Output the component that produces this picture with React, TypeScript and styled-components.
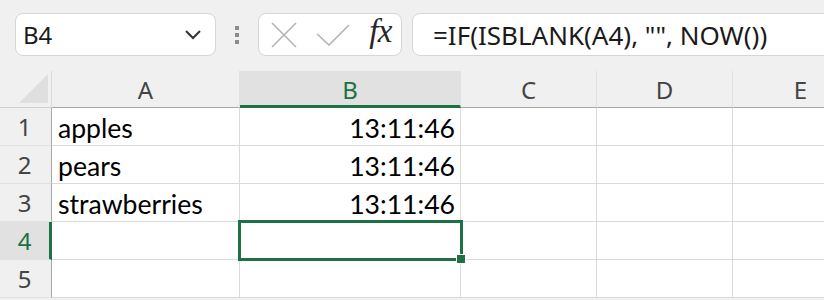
import React from "react";
import styled, { createGlobalStyle } from "styled-components";

const Global = createGlobalStyle`
  html, body { margin: 0; padding: 0; background: #f0f0f0; }
  body { width: 824px; height: 300px; overflow: hidden; }
`;

const Page = styled.div`
  width: 824px;
  height: 300px;
  background: #f0f0f0;
  overflow: hidden;
  font-family: "Noto Sans", "Open Sans", sans-serif;
`;

const Toolbar = styled.div`
  display: flex;
  align-items: center;
  height: 71px;
  padding: 0 0 2px 15px;
  box-sizing: border-box;
`;

const Box = styled.div<{ $w: number }>`
  width: ${(p) => p.$w}px;
  flex: none;
  height: 43px;
  box-sizing: border-box;
  background: #fff;
  border: 1px solid #d6d6d6;
  border-radius: 8px;
  display: flex;
  align-items: center;
`;

const NameText = styled.span`
  flex: 1;
  padding-left: 7px;
  font-size: 24px;
  color: #1a1a1a;
`;

const Chevron = styled.svg`
  margin-right: 13px;
`;

const Dots = styled.div`
  width: 42px;
  flex: none;
  display: flex;
  flex-direction: column;
  align-items: center;
  gap: 3px;
  & > i {
    display: block;
    width: 4px;
    height: 4px;
    background: #8c8c8c;
  }
`;

const IconsBox = styled(Box)`
  justify-content: space-between;
  padding: 0 9px 0 12px;
`;

const Fx = styled.span`
  font-family: "Liberation Serif", "DejaVu Serif", serif;
  font-style: italic;
  font-size: 33px;
  color: #262626;
  letter-spacing: -0.5px;
  margin-top: -6px;
`;

const FormulaBox = styled(Box)`
  margin-left: 10px;
  padding-left: 20px;
  border-top-right-radius: 0;
  border-bottom-right-radius: 0;
`;

const FormulaText = styled.span`
  font-size: 26px;
  color: #1a1a1a;
  white-space: nowrap;
`;

const Grid = styled.div`
  display: grid;
  grid-template-columns: 52px 188px 221px 136px 136px 136px;
  grid-template-rows: 37px repeat(5, 38px);
  width: 869px;
  background: #fff;
`;

const Corner = styled.div`
  background: #f0f0f0;
  border-right: 1px solid #d5dae0;
  border-bottom: 1px solid #c8d0d8;
  position: relative;
  box-sizing: border-box;
  &::after {
    content: "";
    position: absolute;
    right: 3px;
    bottom: 4px;
    width: 29px;
    height: 29px;
    background: #dfdfdf;
    clip-path: polygon(100% 0, 100% 100%, 0 100%);
  }
`;

const ColHead = styled.div<{ $sel?: boolean }>`
  box-sizing: border-box;
  background: ${(p) => (p.$sel ? "#e1e1e1" : "#f0f0f0")};
  border-right: 1px solid #dde2e6;
  border-bottom: ${(p) => (p.$sel ? "3px solid #1e7145" : "1px solid #a8a8a8")};
  display: flex;
  align-items: center;
  justify-content: center;
  padding-top: ${(p) => (p.$sel ? "2px" : "0")};
  font-size: 24px;
  color: ${(p) => (p.$sel ? "#1e7145" : "#444")};
`;

const RowHead = styled.div<{ $sel?: boolean }>`
  box-sizing: border-box;
  background: ${(p) => (p.$sel ? "#e1e1e1" : "#f0f0f0")};
  border-right: ${(p) => (p.$sel ? "3px solid #1e7145" : "1px solid #a8a8a8")};
  border-bottom: 1px solid #dde2e6;
  display: flex;
  align-items: center;
  justify-content: center;
  padding-right: ${(p) => (p.$sel ? "0" : "2px")};
  font-size: 24px;
  color: ${(p) => (p.$sel ? "#1e7145" : "#444")};
`;

const Cell = styled.div<{ $right?: boolean }>`
  box-sizing: border-box;
  position: relative;
  border-right: 1px solid #dadada;
  border-bottom: 1px solid #dadada;
  display: flex;
  align-items: center;
  justify-content: ${(p) => (p.$right ? "flex-end" : "flex-start")};
  padding: 2px 5px 0 6px;
  font-family: "Lato", "Open Sans", sans-serif;
  font-size: 26.6px;
  color: #000;
  white-space: nowrap;
`;

const Selection = styled.div`
  position: absolute;
  left: -2px;
  top: -2px;
  right: -3px;
  bottom: -2px;
  border: 3px solid #1e7145;
  pointer-events: none;
  z-index: 2;
`;

const Handle = styled.div`
  position: absolute;
  right: -6px;
  bottom: -6px;
  width: 8px;
  height: 8px;
  background: #1e7145;
  border: 1px solid #fff;
`;

const cols = ["A", "B", "C", "D", "E"];
const data: [string, string][] = [
  ["apples", "13:11:46"],
  ["pears", "13:11:46"],
  ["strawberries", "13:11:46"],
  ["", ""],
  ["", ""],
];

export default function App() {
  return (
    <Page>
      <Global />
      <Toolbar>
        <Box $w={201}>
          <NameText>B4</NameText>
          <Chevron width="18" height="12" viewBox="0 0 18 12">
            <path d="M2 2 L9 9 L16 2" fill="none" stroke="#333" strokeWidth="2" />
          </Chevron>
        </Box>
        <Dots>
          <i />
          <i />
          <i />
        </Dots>
        <IconsBox $w={144}>
          <svg width="26" height="26" viewBox="0 0 26 26">
            <path d="M1 1 L25 25 M25 1 L1 25" stroke="#b4b4b4" strokeWidth="1.6" fill="none" />
          </svg>
          <svg width="34" height="22" viewBox="0 0 34 22">
            <path d="M1 10 L13 21 L33 1" stroke="#b4b4b4" strokeWidth="1.6" fill="none" />
          </svg>
          <Fx>fx</Fx>
        </IconsBox>
        <FormulaBox $w={420}>
          <FormulaText>=IF(ISBLANK(A4), "", NOW())</FormulaText>
        </FormulaBox>
      </Toolbar>
      <Grid>
        <Corner />
        {cols.map((c) => (
          <ColHead key={c} $sel={c === "B"}>
            {c}
          </ColHead>
        ))}
        {data.map((row, i) => (
          <React.Fragment key={i}>
            <RowHead $sel={i === 3}>{i + 1}</RowHead>
            <Cell>{row[0]}</Cell>
            <Cell $right>
              {row[1]}
              {i === 3 && (
                <Selection>
                  <Handle />
                </Selection>
              )}
            </Cell>
            <Cell />
            <Cell />
            <Cell />
          </React.Fragment>
        ))}
      </Grid>
    </Page>
  );
}
